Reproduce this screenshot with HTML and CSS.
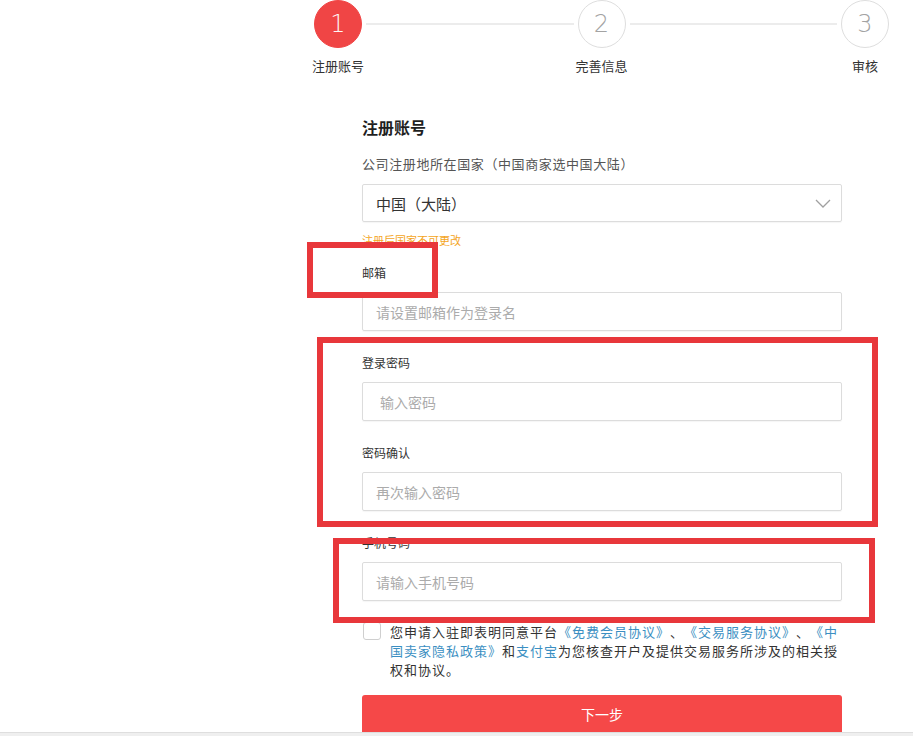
FILE: index.html
```html
<!DOCTYPE html>
<html lang="zh-CN">
<head>
<meta charset="utf-8">
<title>注册账号</title>
<link rel="stylesheet" href="styles.css">
</head>
<body>
<div class="page">
  <div class="steps">
    <div class="step active">
      <div class="circle">1</div>
      <div class="step-label">注册账号</div>
    </div>
    <div class="connector"></div>
    <div class="step">
      <div class="circle">2</div>
      <div class="step-label">完善信息</div>
    </div>
    <div class="connector"></div>
    <div class="step">
      <div class="circle">3</div>
      <div class="step-label">审核</div>
    </div>
  </div>

  <form class="form">
    <h2 class="title">注册账号</h2>
    <div class="country-label">公司注册地所在国家（中国商家选中国大陆）</div>
    <div class="select">
      <span class="select-value">中国（大陆）</span>
      <svg class="chevron" width="16" height="9" viewBox="0 0 16 9"><polyline points="1,1 8,8 15,1" fill="none" stroke="#a0a0a0" stroke-width="1.3"/></svg>
    </div>
    <div class="hint">注册后国家不可更改</div>

    <div class="field first">
      <div class="label">邮箱</div>
      <div class="input">请设置邮箱作为登录名</div>
    </div>
    <div class="field">
      <div class="label">登录密码</div>
      <div class="input indent">输入密码</div>
    </div>
    <div class="field">
      <div class="label">密码确认</div>
      <div class="input">再次输入密码</div>
    </div>
    <div class="field">
      <div class="label">手机号码</div>
      <div class="input">请输入手机号码</div>
    </div>

    <div class="agree">
      <span class="checkbox"></span>
      <p class="agree-text">您申请入驻即表明同意平台<span class="link">《免费会员协议》</span>、<span class="link">《交易服务协议》</span>、<span class="link">《中</span><br><span class="link">国卖家隐私政策》</span>和<span class="link">支付宝</span>为您核查开户及提供交易服务所涉及的相关授<br>权和协议。</p>
    </div>

    <div class="btn">下一步</div>
  </form>
  <div class="bottom-bar"></div>

  <div class="mark mark-1"></div>
  <div class="mark mark-2"></div>
  <div class="mark mark-3"></div>
</div>
</body>
</html>
```

FILE: styles.css
```css
html, body {
  margin: 0;
  padding: 0;
  background: #ffffff;
}
body {
  font-family: "Noto Sans CJK SC", "Noto Sans", sans-serif;
  color: #333333;
  overflow: hidden;
  text-spacing-trim: space-all;
  font-feature-settings: "halt" 0, "chws" 0;
}
.page {
  position: relative;
  width: 913px;
  height: 736px;
}

/* steps */
.steps {
  display: flex;
  margin-left: 314px;
  width: 575px;
}
.step {
  width: 48px;
  display: flex;
  flex-direction: column;
  align-items: center;
}
.circle {
  width: 48px;
  height: 48px;
  box-sizing: border-box;
  border-radius: 50%;
  border: 1px solid #dedede;
  background: #fff;
  color: #a3a3a3;
  font-family: "DejaVu Sans", "Liberation Sans", sans-serif;
  font-weight: 200;
  font-size: 24px;
  display: flex;
  align-items: center;
  justify-content: center;
}
.step.active .circle {
  background: #f04545;
  border-color: #f04545;
  color: #fff6f6;
}
.step-label {
  margin-top: 10px;
  font-size: 13px;
  line-height: 16px;
  white-space: nowrap;
  color: #333;
}
.connector {
  flex: 1;
  height: 2px;
  margin: 23px 4px 0;
  background: #ececec;
}

/* form */
.form {
  margin: 0 0 0 362px;
  width: 480px;
}
.title {
  margin: 42px 0 0;
  font-size: 16px;
  line-height: 22px;
  font-weight: 700;
  color: #1f1f1f;
}
.country-label {
  margin-top: 17px;
  font-size: 13px;
  letter-spacing: 0.6px;
  line-height: 18px;
  color: #555;
}
.select {
  margin-top: 11px;
  height: 38px;
  box-sizing: border-box;
  border: 1px solid #dcdcdc;
  border-radius: 2px;
  display: flex;
  align-items: center;
  justify-content: space-between;
  padding: 0 10px 0 13px;
  box-shadow: 0 1px 1px rgba(0,0,0,0.04);
}
.select-value {
  font-size: 15px;
  color: #333;
}
.hint {
  margin-top: 10px;
  font-size: 11px;
  line-height: 16px;
  color: #f4a524;
}
.field {
  margin-top: 23px;
}
.field.first {
  margin-top: 16px;
}
.label {
  font-size: 12px;
  line-height: 18px;
  color: #333;
}
.input {
  margin-top: 10px;
  height: 39px;
  box-sizing: border-box;
  border: 1px solid #dcdcdc;
  border-radius: 2px;
  padding-left: 13px;
  display: flex;
  align-items: center;
  font-size: 14px;
  color: #ababab;
  box-shadow: 0 1px 1px rgba(0,0,0,0.04);
}
.input.indent {
  padding-left: 17px;
}
.agree {
  margin-top: 21px;
  display: flex;
  align-items: flex-start;
  gap: 9px;
}
.checkbox {
  flex: none;
  width: 18px;
  height: 18px;
  box-sizing: border-box;
  border: 1px solid #cfcfcf;
  border-radius: 3px;
  margin-left: 1px;
  background: #fff;
}
.agree-text {
  margin: 0;
  width: 452px;
  font-size: 13px;
  letter-spacing: 1px;
  line-height: 19px;
  color: #333;
}
.link {
  color: #3b8fc2;
}
.btn {
  margin-top: 16px;
  height: 37px;
  background: #f54848;
  border-radius: 3px 3px 0 0;
  color: #fff;
  font-size: 14px;
  display: flex;
  align-items: center;
  justify-content: center;
}
.bottom-bar {
  height: 3px;
  background: #efefef;
  border-top: 1px solid #dedede;
}

/* annotation overlays */
.mark {
  position: absolute;
  box-sizing: border-box;
  border: 6px solid #e8373b;
}
.mark-1 {
  left: 307px;
  top: 242px;
  width: 131px;
  height: 56px;
}
.mark-2 {
  left: 317px;
  top: 337px;
  width: 561px;
  height: 190px;
}
.mark-3 {
  left: 333px;
  top: 538px;
  width: 542px;
  height: 85px;
}
```
